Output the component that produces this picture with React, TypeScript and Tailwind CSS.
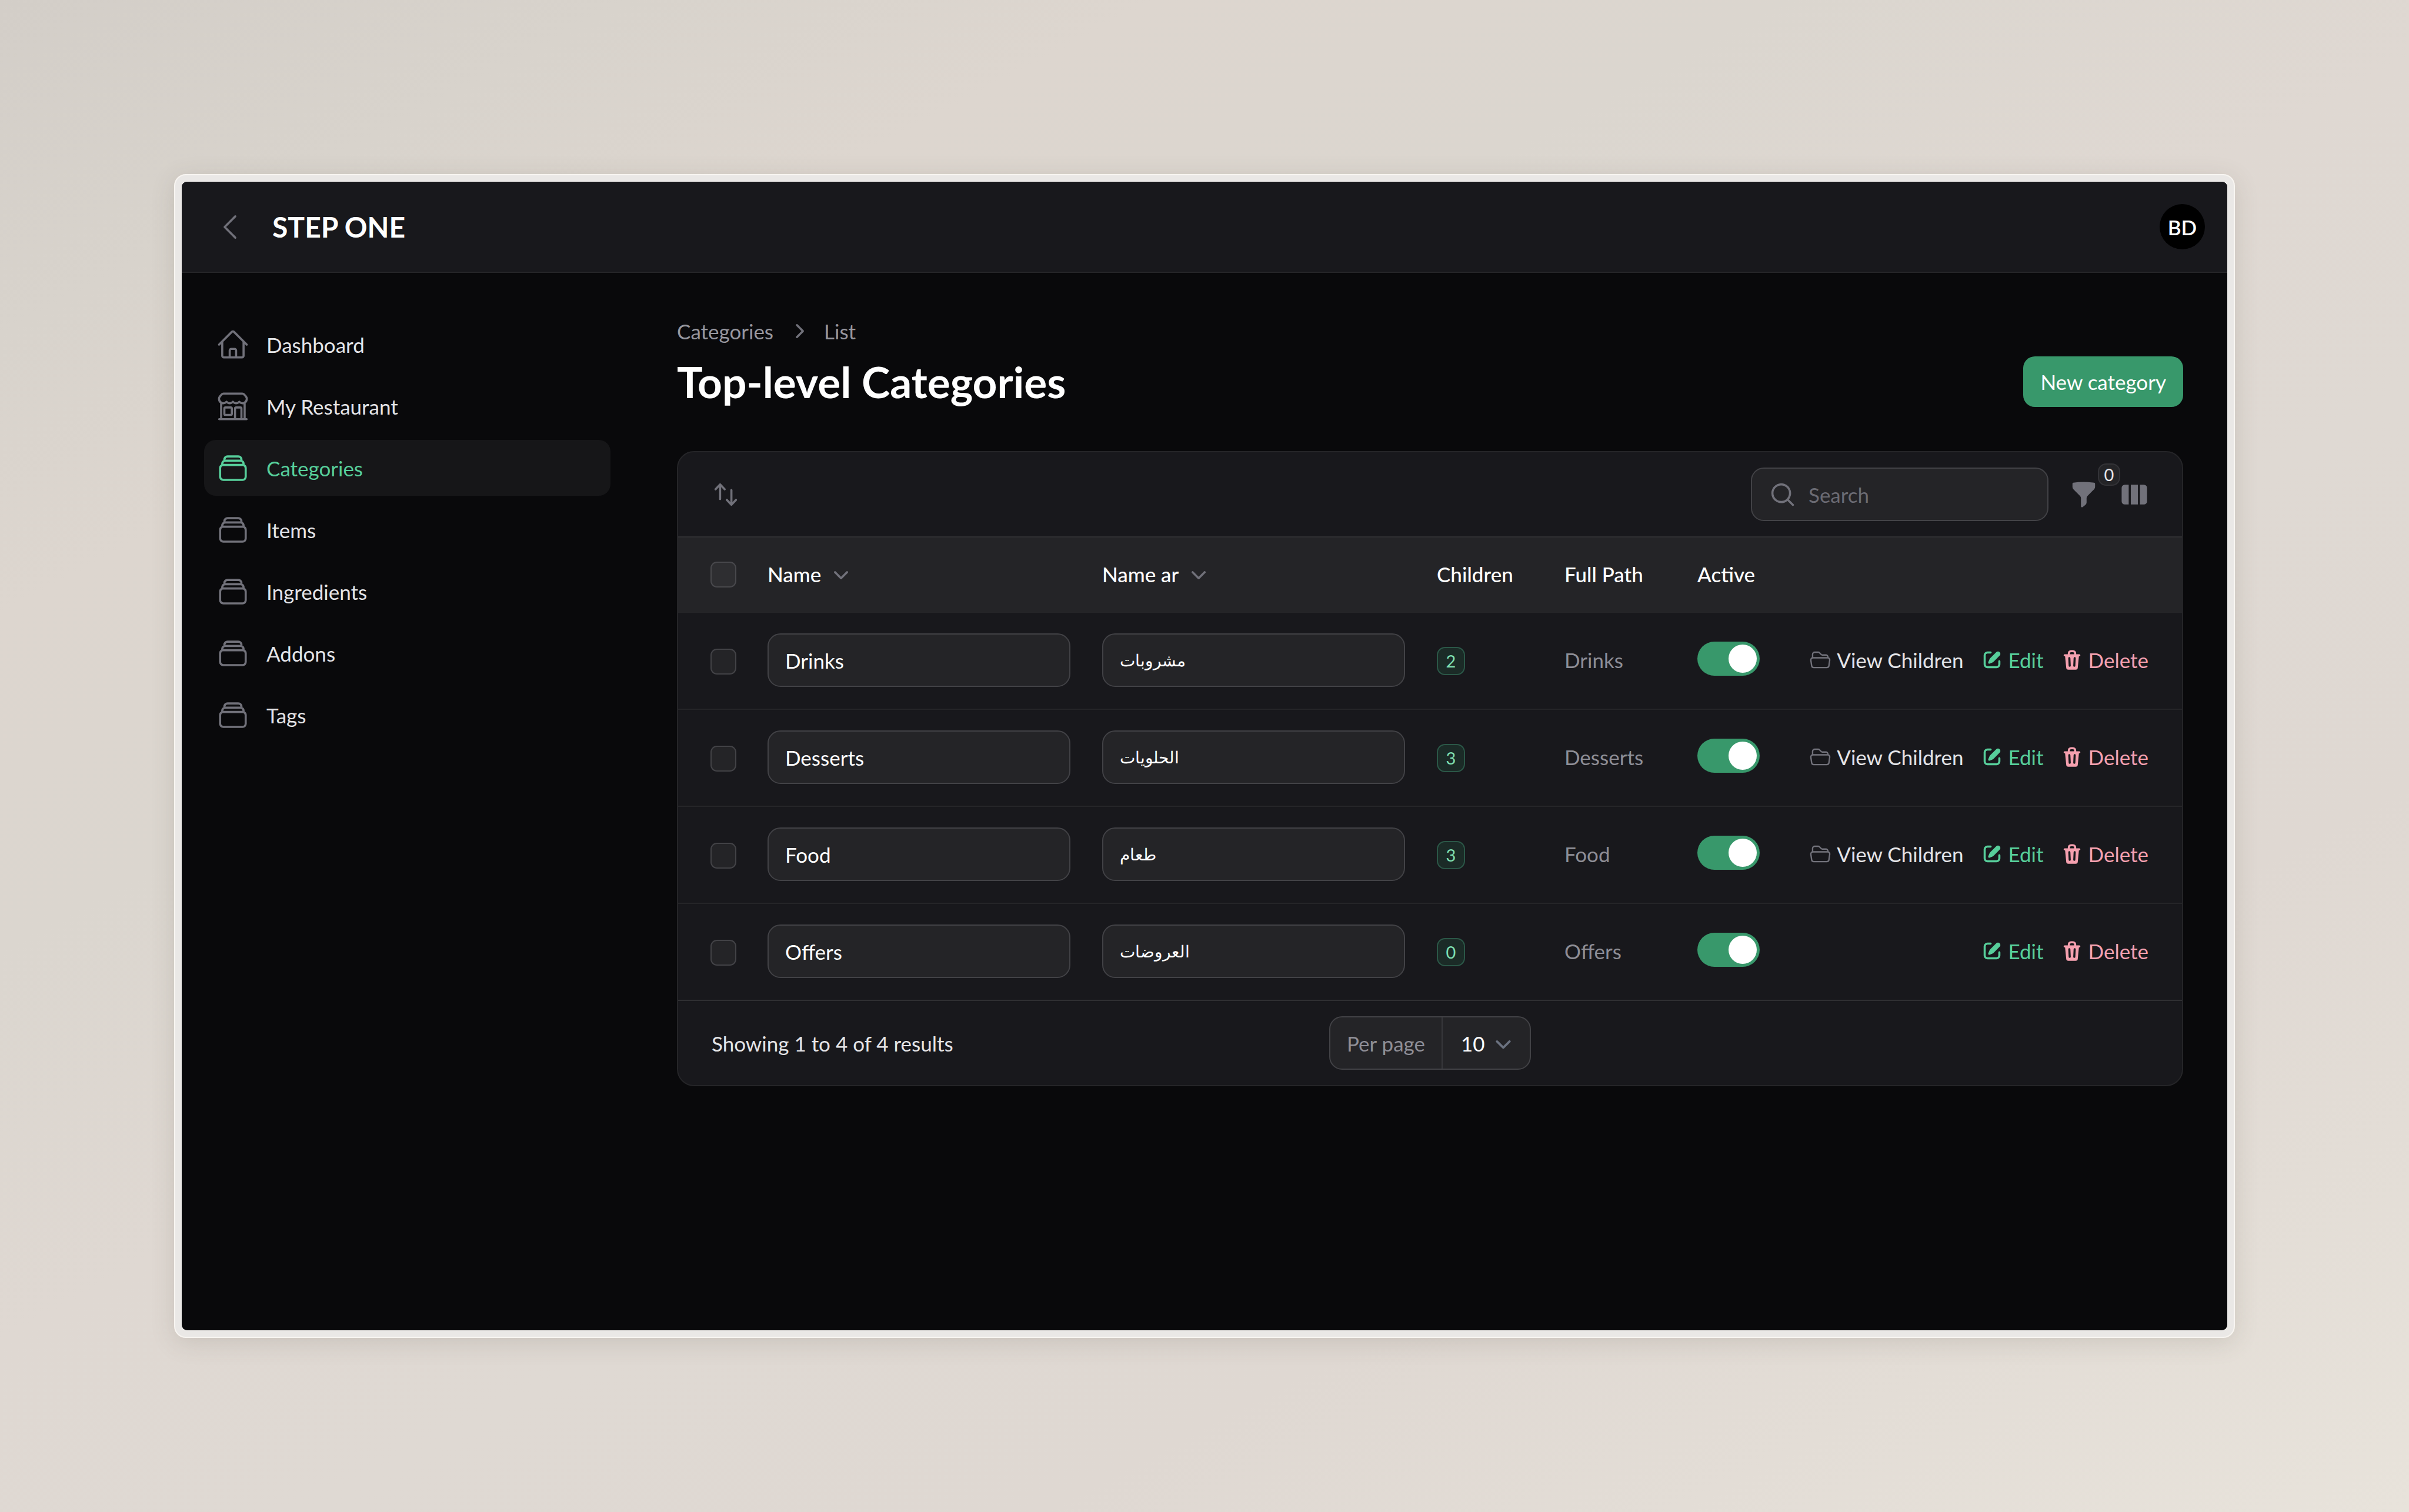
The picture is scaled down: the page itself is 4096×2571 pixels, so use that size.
import type { ReactNode } from "react";

type IconProps = { className?: string };

function Outline({ className = "", d }: { className?: string; d: string }) {
  return (
    <svg
      viewBox="0 0 24 24"
      fill="none"
      stroke="currentColor"
      strokeWidth={1.5}
      strokeLinecap="round"
      strokeLinejoin="round"
      aria-hidden="true"
      className={`shrink-0 ${className}`}
    >
      <path d={d} />
    </svg>
  );
}

function Solid({ className = "", box, d }: { className?: string; box: string; d: string[] }) {
  return (
    <svg viewBox={box} fill="currentColor" aria-hidden="true" className={`shrink-0 ${className}`}>
      {d.map((p) => (
        <path key={p} fillRule="evenodd" clipRule="evenodd" d={p} />
      ))}
    </svg>
  );
}

const HOME =
  "m2.25 12 8.954-8.955c.44-.439 1.152-.439 1.591 0L21.75 12M4.5 9.75v10.125c0 .621.504 1.125 1.125 1.125H9.75v-4.875c0-.621.504-1.125 1.125-1.125h2.25c.621 0 1.125.504 1.125 1.125V21h4.125c.621 0 1.125-.504 1.125-1.125V9.75M8.25 21h8.25";
const STORE =
  "M13.5 21v-7.5a.75.75 0 0 1 .75-.75h3a.75.75 0 0 1 .75.75V21m-4.5 0H2.36m11.14 0H18m0 0h3.64m-1.39 0V9.349M3.75 21V9.349m0 0a3.001 3.001 0 0 0 3.75-.615A2.993 2.993 0 0 0 9.75 9.75c.896 0 1.7-.393 2.25-1.016a2.993 2.993 0 0 0 2.25 1.016c.896 0 1.7-.393 2.25-1.015a3.001 3.001 0 0 0 3.75.614m-16.5 0a3.004 3.004 0 0 1-.621-4.72l1.189-1.19A1.5 1.5 0 0 1 5.378 3h13.243a1.5 1.5 0 0 1 1.06.44l1.19 1.189a3 3 0 0 1-.621 4.72M6.75 18h3.75a.75.75 0 0 0 .75-.75V13.5a.75.75 0 0 0-.75-.75H6.75a.75.75 0 0 0-.75.75v3.75c0 .414.336.75.75.75Z";
const STACK =
  "M6 6.878V6a2.25 2.25 0 0 1 2.25-2.25h7.5A2.25 2.25 0 0 1 18 6v.878m-12 0c.235-.083.487-.128.75-.128h10.5c.263 0 .515.045.75.128m-12 0A2.25 2.25 0 0 0 4.5 9v.878m13.5-3A2.25 2.25 0 0 1 19.5 9v.878m0 0a2.246 2.246 0 0 0-.75-.128H5.25c-.263 0-.515.045-.75.128m15 0A2.25 2.25 0 0 1 21 12v6a2.25 2.25 0 0 1-2.25 2.25H5.25A2.25 2.25 0 0 1 3 18v-6c0-.98.626-1.813 1.5-2.122";
const FOLDER =
  "M3.75 9.776c.112-.017.227-.026.344-.026h15.812c.117 0 .232.009.344.026m-16.5 0a2.25 2.25 0 0 0-1.883 2.542l.857 6a2.25 2.25 0 0 0 2.227 1.932H19.05a2.25 2.25 0 0 0 2.227-1.932l.857-6a2.25 2.25 0 0 0-1.883-2.542m-16.5 0V6A2.25 2.25 0 0 1 6 3.75h3.879a1.5 1.5 0 0 1 1.06.44l2.122 2.12a1.5 1.5 0 0 0 1.06.44H18A2.25 2.25 0 0 1 20.25 9v.776";

const ChevronDown = ({ className }: IconProps) => (
  <Solid
    className={className}
    box="0 0 20 20"
    d={["M5.22 8.22a.75.75 0 0 1 1.06 0L10 11.94l3.72-3.72a.75.75 0 1 1 1.06 1.06l-4.25 4.25a.75.75 0 0 1-1.06 0L5.22 9.28a.75.75 0 0 1 0-1.06Z"]}
  />
);
const ChevronRight = ({ className }: IconProps) => (
  <Solid
    className={className}
    box="0 0 20 20"
    d={["M8.22 5.22a.75.75 0 0 1 1.06 0l4.25 4.25a.75.75 0 0 1 0 1.06l-4.25 4.25a.75.75 0 0 1-1.06-1.06L11.94 10 8.22 6.28a.75.75 0 0 1 0-1.06Z"]}
  />
);
const ArrowsUpDown = ({ className }: IconProps) => (
  <Solid
    className={className}
    box="0 0 20 20"
    d={[
      "M2.24 6.8a.75.75 0 0 0 1.06-.04l1.95-2.1v8.59a.75.75 0 0 0 1.5 0V4.66l1.95 2.1a.75.75 0 1 0 1.1-1.02l-3.25-3.5a.75.75 0 0 0-1.1 0L2.2 5.74a.75.75 0 0 0 .04 1.06Zm8 6.4a.75.75 0 0 0-.04 1.06l3.25 3.5a.75.75 0 0 0 1.1 0l3.25-3.5a.75.75 0 1 0-1.1-1.02l-1.95 2.1V6.75a.75.75 0 0 0-1.5 0v8.59l-1.95-2.1a.75.75 0 0 0-1.06-.04Z",
    ]}
  />
);
const Magnifier = ({ className }: IconProps) => (
  <Solid
    className={className}
    box="0 0 20 20"
    d={["M9 3.5a5.5 5.5 0 1 0 0 11 5.5 5.5 0 0 0 0-11ZM2 9a7 7 0 1 1 12.452 4.391l3.328 3.329a.75.75 0 1 1-1.06 1.06l-3.329-3.328A7 7 0 0 1 2 9Z"]}
  />
);
const Funnel = ({ className }: IconProps) => (
  <Solid
    className={className}
    box="0 0 20 20"
    d={[
      "M2.628 1.601C5.028 1.206 7.49 1 10 1s4.973.206 7.372.601a.75.75 0 0 1 .628.74v2.288a2.25 2.25 0 0 1-.659 1.59l-4.682 4.683a2.25 2.25 0 0 0-.659 1.59v3.037c0 .684-.31 1.33-.844 1.757l-1.937 1.55A.75.75 0 0 1 8 18.25v-5.757a2.25 2.25 0 0 0-.659-1.591L2.659 6.22A2.25 2.25 0 0 1 2 4.629V2.34a.75.75 0 0 1 .628-.74Z",
    ]}
  />
);
const Columns = ({ className }: IconProps) => (
  <Solid
    className={className}
    box="0 0 20 20"
    d={[
      "M14 17h2.75A2.25 2.25 0 0 0 19 14.75v-9.5A2.25 2.25 0 0 0 16.75 3H14v14ZM12.5 3h-5v14h5V3ZM3.25 3H6v14H3.25A2.25 2.25 0 0 1 1 14.75v-9.5A2.25 2.25 0 0 1 3.25 3Z",
    ]}
  />
);
const Pencil = ({ className }: IconProps) => (
  <Solid
    className={className}
    box="0 0 16 16"
    d={[
      "M13.488 2.513a1.75 1.75 0 0 0-2.475 0L6.75 6.774a2.75 2.75 0 0 0-.596.892l-.848 2.047a.75.75 0 0 0 .98.98l2.047-.848a2.75 2.75 0 0 0 .892-.596l4.261-4.262a1.75 1.75 0 0 0 0-2.474Z",
      "M4.75 3.5c-.69 0-1.25.56-1.25 1.25v6.5c0 .69.56 1.25 1.25 1.25h6.5c.69 0 1.25-.56 1.25-1.25V9A.75.75 0 0 1 14 9v2.25A2.75 2.75 0 0 1 11.25 14h-6.5A2.75 2.75 0 0 1 2 11.25v-6.5A2.75 2.75 0 0 1 4.75 2H7a.75.75 0 0 1 0 1.5H4.75Z",
    ]}
  />
);
const Trash = ({ className }: IconProps) => (
  <Solid
    className={className}
    box="0 0 16 16"
    d={[
      "M5 3.25V4H2.75a.75.75 0 0 0 0 1.5h.3l.815 8.15A1.5 1.5 0 0 0 5.357 15h5.285a1.5 1.5 0 0 0 1.493-1.35l.815-8.15h.3a.75.75 0 0 0 0-1.5H11v-.75A2.25 2.25 0 0 0 8.75 1h-1.5A2.25 2.25 0 0 0 5 3.25Zm2.25-.75a.75.75 0 0 0-.75.75V4h3v-.75a.75.75 0 0 0-.75-.75h-1.5ZM6.05 6a.75.75 0 0 1 .787.713l.275 5.5a.75.75 0 0 1-1.498.075l-.275-5.5A.75.75 0 0 1 6.05 6Zm3.9 0a.75.75 0 0 1 .712.787l-.275 5.5a.75.75 0 0 1-1.498-.075l.275-5.5a.75.75 0 0 1 .786-.711Z",
    ]}
  />
);

const NAV = [
  { label: "Dashboard", icon: HOME },
  { label: "My Restaurant", icon: STORE },
  { label: "Categories", icon: STACK, active: true },
  { label: "Items", icon: STACK },
  { label: "Ingredients", icon: STACK },
  { label: "Addons", icon: STACK },
  { label: "Tags", icon: STACK },
];

const ROWS = [
  { name: "Drinks", ar: "مشروبات", children: 2 },
  { name: "Desserts", ar: "الحلويات", children: 3 },
  { name: "Food", ar: "طعام", children: 3 },
  { name: "Offers", ar: "العروضات", children: 0 },
];

function Sidebar() {
  return (
    <aside className="w-[767px] shrink-0 px-[38px] pt-[74px]">
      <nav>
        <ul className="flex flex-col gap-[10px]">
          {NAV.map((n) => (
            <li key={n.label}>
              <a
                href="#"
                aria-current={n.active ? "page" : undefined}
                className={`flex h-[95px] items-center gap-[28px] rounded-[20px] px-[20px] ${
                  n.active ? "bg-[#161618] text-[#57cf9b]" : "text-[#e4e4e7]"
                }`}
              >
                <Outline d={n.icon} className={`size-[58px] ${n.active ? "" : "text-[#71717a]"}`} />
                {n.label}
              </a>
            </li>
          ))}
        </ul>
      </nav>
    </aside>
  );
}

function CheckBox({ label, header }: { label: string; header?: boolean }) {
  return (
    <input
      type="checkbox"
      aria-label={label}
      className={`block size-[44px] appearance-none rounded-[11px] border-2 ${
        header ? "border-[#48484c] bg-[#2e2e31]" : "border-[#424246] bg-[#242427]"
      }`}
    />
  );
}

function TextField({ label, value, className = "" }: { label: string; value: string; className?: string }) {
  return (
    <input
      type="text"
      aria-label={label}
      defaultValue={value}
      className={`block h-[91px] w-full rounded-[22px] border-2 border-[#424246] bg-[#242427] px-[28px] text-white ${className}`}
    />
  );
}

function SortHeader({ children }: { children: ReactNode }) {
  return (
    <button type="button" className="flex items-center gap-[10px]">
      {children}
      <ChevronDown className="size-[48px] text-[#71717a]" />
    </button>
  );
}

function Action({ icon, className, children }: { icon: ReactNode; className: string; children: ReactNode }) {
  return (
    <a href="#" className={`flex items-center gap-[9px] whitespace-nowrap ${className}`}>
      {icon}
      {children}
    </a>
  );
}

function CategoryTable() {
  const td = "h-[165px] border-t-2 border-[#252528] px-[27px]";
  const th = "h-[126px] px-[27px] pb-[2px] text-left font-medium text-white";
  return (
    <table className="w-full table-fixed border-separate border-spacing-0">
      <colgroup>
        <col className="w-[125px]" />
        <col />
        <col />
        <col className="w-[217px]" />
        <col className="w-[226px]" />
        <col className="w-[160px]" />
        <col className="w-[691px]" />
      </colgroup>
      <thead className="bg-[#242427]">
        <tr>
          <th className="h-[126px] pl-[55px] text-left">
            <CheckBox label="Select all" header />
          </th>
          <th className={th}>
            <SortHeader>Name</SortHeader>
          </th>
          <th className={th}>
            <SortHeader>Name ar</SortHeader>
          </th>
          <th className={th}>Children</th>
          <th className={th}>Full Path</th>
          <th className={th}>Active</th>
          <td />
        </tr>
      </thead>
      <tbody>
        {ROWS.map((r) => (
          <tr key={r.name}>
            <td className="h-[165px] border-t-2 border-[#252528] pt-[2px] pl-[55px]">
              <CheckBox label={`Select ${r.name}`} />
            </td>
            <td className={`${td} pb-[2px]`}>
              <TextField label="Name" value={r.name} />
            </td>
            <td className={`${td} pb-[2px]`}>
              <TextField label="Name ar" value={r.ar} className="text-[28px]" />
            </td>
            <td className={td}>
              <span className="flex size-[48px] items-center justify-center rounded-[14px] border-2 border-[#2b5747] bg-[#1b2b27] text-[29px] text-[#7fe0b3]">
                {r.children}
              </span>
            </td>
            <td className={`${td} pb-[4px] text-[#8e8e96]`}>{r.name}</td>
            <td className={`${td} pb-[8px]`}>
              <input
                type="checkbox"
                role="switch"
                defaultChecked
                aria-label={`${r.name} active`}
                className="flex h-[58px] w-[106px] appearance-none items-center justify-end rounded-full bg-[#38986b] px-[5px] before:size-[48px] before:rounded-full before:bg-white"
              />
            </td>
            <td className="h-[165px] border-t-2 border-[#252528] pr-[57px] pb-[4px]">
              <div className="flex items-center justify-end gap-[29px]">
                {r.children > 0 && (
                  <Action className="text-[#e4e4e7]" icon={<Outline d={FOLDER} className="size-[38px] text-[#71717a]" />}>
                    View Children
                  </Action>
                )}
                <Action className="text-[#57cf9b]" icon={<Pencil className="size-[38px]" />}>
                  Edit
                </Action>
                <Action className="text-[#f5a0af]" icon={<Trash className="size-[38px]" />}>
                  Delete
                </Action>
              </div>
            </td>
          </tr>
        ))}
      </tbody>
    </table>
  );
}

export default function App() {
  return (
    <div className="flex min-h-screen flex-col bg-[linear-gradient(152deg,#d3cec8_0%,#d8d3cc_12%,#ddd6cf_22%,#dbd6cf_34%,#dfd8d2_48%,#dfd9d3_60%,#dfd8d2_74%,#e3ddd6_86%,#e8e3db_100%)] p-[296px] font-['Lato',sans-serif] text-[35px] leading-[48px]">
      <div className="flex flex-1 flex-col rounded-[20px] border-2 border-[#f8f5f1] bg-[#eae8e6] p-[11px] shadow-[0_8px_40px_rgba(90,80,70,0.16)]">
        <div className="flex flex-1 flex-col overflow-hidden rounded-[9px] bg-[#09090b]">
          <header className="flex h-[155px] items-center border-b-2 border-[#252528] bg-[#18181c] pr-[38px] pl-[53px]">
            <button type="button" aria-label="Collapse sidebar" className="text-[#71717a]">
              <Outline d="M15.75 19.5 8.25 12l7.5-7.5" className="size-[58px]" />
            </button>
            <a href="#" className="ml-[43px] text-[48px] leading-[58px] font-bold text-white">
              STEP ONE
            </a>
            <button
              type="button"
              aria-label="User menu"
              className="ml-auto flex size-[77px] items-center justify-center rounded-full bg-black font-semibold text-white"
            >
              BD
            </button>
          </header>

          <div className="flex flex-1">
            <Sidebar />
            <main className="min-w-0 flex-1 px-[75px] py-[75px]">
              <nav aria-label="Breadcrumb" className="flex items-center gap-[19px] text-[#97979f]">
                <a href="#">Categories</a>
                <ChevronRight className="size-[48px] text-[#71717a]" />
                <a href="#">List</a>
              </nav>
              <div className="mt-[19px] flex items-center justify-between">
                <h1 className="text-[73px] leading-[86px] font-bold text-white">Top-level Categories</h1>
                <button
                  type="button"
                  className="h-[86px] rounded-[20px] bg-[#38986b] px-[29px] text-white"
                >
                  New category
                </button>
              </div>

              <section className="mt-[75px] overflow-hidden rounded-[29px] border-2 border-[#252528] bg-[#18181c]">
                <div className="flex items-center border-b-2 border-[#2f2f32] px-[57px] py-[26px]">
                  <button type="button" aria-label="Reorder records" className="text-[#71717a]">
                    <ArrowsUpDown className="size-[48px]" />
                  </button>
                  <label className="ml-auto flex h-[91px] w-[506px] items-center gap-[20px] rounded-[22px] border-2 border-[#424246] bg-[#242427] px-[28px]">
                    <Magnifier className="size-[48px] text-[#71717a]" />
                    <input
                      type="search"
                      aria-label="Search"
                      placeholder="Search"
                      className="min-w-0 flex-1 bg-transparent text-white placeholder:text-[#6b6b73]"
                    />
                  </label>
                  <button type="button" aria-label="Filter" className="relative ml-[36px] text-[#71717a]">
                    <Funnel className="size-[48px]" />
                    <span className="absolute -top-[29px] left-full flex size-[38px] items-center justify-center rounded-[14px] border-2 border-[#333337] bg-[#242427] text-[29px] text-[#e4e4e7]">
                      0
                    </span>
                  </button>
                  <button type="button" aria-label="Toggle columns" className="ml-[38px] text-[#71717a]">
                    <Columns className="size-[48px]" />
                  </button>
                </div>

                <CategoryTable />

                <div className="grid grid-cols-[1fr_auto_1fr] items-center border-t-2 border-[#2f2f32] px-[57px] py-[26px]">
                  <span className="text-[#e4e4e7]">Showing 1 to 4 of 4 results</span>
                  <label className="flex h-[91px] items-center rounded-[22px] border-2 border-[#424246] bg-[#242427]">
                    <span className="px-[28px] text-[#8e8e96]">Per page</span>
                    <span className="relative flex h-full items-center border-l-2 border-[#37373b]">
                      <select className="h-full w-[148px] appearance-none bg-transparent pl-[31px] text-white">
                        <option>10</option>
                      </select>
                      <ChevronDown className="pointer-events-none absolute right-[20px] size-[50px] text-[#6b7280]" />
                    </span>
                  </label>
                </div>
              </section>
            </main>
          </div>
        </div>
      </div>
    </div>
  );
}
